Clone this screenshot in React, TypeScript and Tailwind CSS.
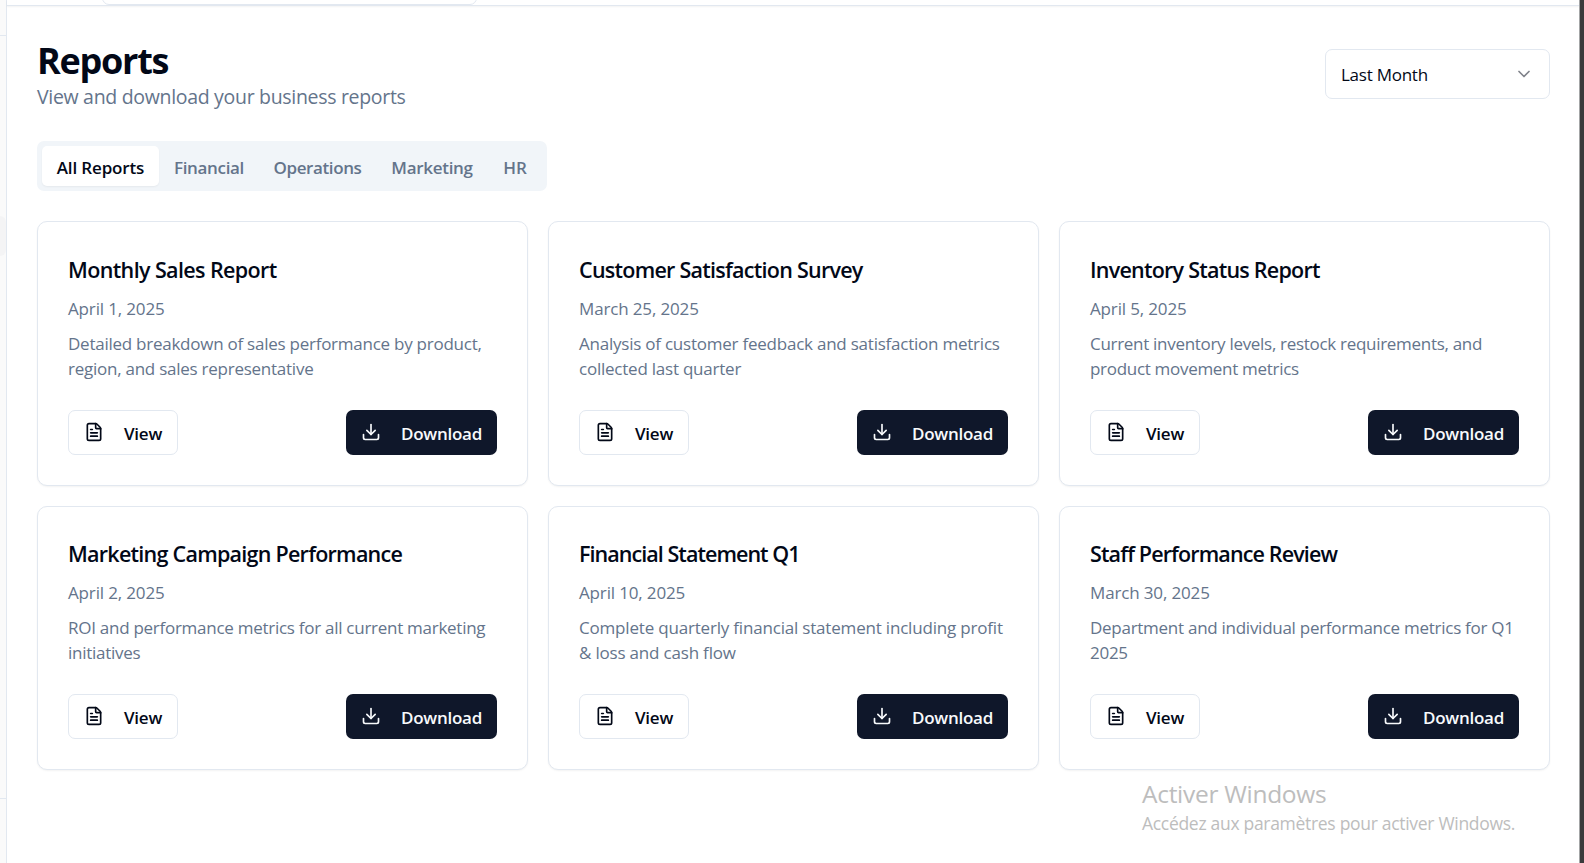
import { ChevronDown, Download, FileText } from "lucide-react";

type Report = {
  title: string;
  titleClass: string;
  date: string;
  description: string;
  descriptionClass: string;
};

const reports: Report[] = [
  {
    title: "Monthly Sales Report",
    titleClass: "tracking-[-0.62px]",
    date: "April 1, 2025",
    description: "Detailed breakdown of sales performance by product, region, and sales representative",
    descriptionClass: "tracking-[-0.25px]",
  },
  {
    title: "Customer Satisfaction Survey",
    titleClass: "tracking-[-0.74px]",
    date: "March 25, 2025",
    description: "Analysis of customer feedback and satisfaction metrics collected last quarter",
    descriptionClass: "tracking-[-0.23px]",
  },
  {
    title: "Inventory Status Report",
    titleClass: "tracking-[-0.76px]",
    date: "April 5, 2025",
    description: "Current inventory levels, restock requirements, and product movement metrics",
    descriptionClass: "tracking-[-0.3px]",
  },
  {
    title: "Marketing Campaign Performance",
    titleClass: "tracking-[-0.74px]",
    date: "April 2, 2025",
    description: "ROI and performance metrics for all current marketing initiatives",
    descriptionClass: "tracking-[-0.27px]",
  },
  {
    title: "Financial Statement Q1",
    titleClass: "tracking-[-0.95px]",
    date: "April 10, 2025",
    description: "Complete quarterly financial statement including profit & loss and cash flow",
    descriptionClass: "tracking-[-0.19px]",
  },
  {
    title: "Staff Performance Review",
    titleClass: "tracking-[-0.86px]",
    date: "March 30, 2025",
    description: "Department and individual performance metrics for Q1 2025",
    descriptionClass: "tracking-[-0.27px]",
  },
];

const tabs = [
  { label: "All Reports", className: "w-[117px] rounded-[5px] bg-white text-[#020817] shadow-[0_1px_2px_rgba(0,0,0,0.05)] tracking-[-0.15px]" },
  { label: "Financial", className: "w-[100px] tracking-[-0.34px]" },
  { label: "Operations", className: "w-[117px] tracking-[-0.39px]" },
  { label: "Marketing", className: "w-[112px] tracking-[-0.29px]" },
  { label: "HR", className: "w-[54px]" },
];

function Sidebar() {
  return (
    <aside className="flex w-[7px] shrink-0 flex-col border-r border-[#e2e8f0] bg-[#fafafa]">
      <div className="h-9 border-b border-[#e2e8f0]" />
      <div className="mt-[180px] h-10 rounded-r-md bg-[#f4f4f5]" />
      <div className="mt-[542px] border-t border-[#e2e8f0]" />
    </aside>
  );
}

function ReportCard({ report }: { report: Report }) {
  return (
    <article className="flex h-[264.375px] flex-col rounded-[10px] border border-[#e2e8f0] bg-white px-[30px] pt-[32.75px] shadow-[0_1px_2px_rgba(0,0,0,0.05)]">
      <h3 className={`text-[21.5px] leading-[30px] font-semibold whitespace-nowrap ${report.titleClass}`}>{report.title}</h3>
      <p className="mt-[11px] text-[17px] leading-[25px] tracking-[-0.15px] text-[#64748b]">{report.date}</p>
      <p className={`mt-2.5 text-[17px] leading-[25px] text-[#64748b] ${report.descriptionClass}`}>{report.description}</p>
      <div className="mt-[28.6px] flex justify-between">
        <button className="flex h-[45px] items-center gap-5 rounded-[7px] border border-[#e2e8f0] px-[15px] text-[17px] leading-[25px] font-semibold tracking-[-0.25px]">
          <FileText size={20} />
          <span className="pt-0.5">View</span>
        </button>
        <button className="flex h-[45px] items-center gap-5 rounded-[7px] bg-[#0f172a] px-[15px] text-[17px] leading-[25px] font-semibold tracking-[-0.25px] text-[#f8fafc]">
          <Download size={20} />
          <span className="pt-0.5">Download</span>
        </button>
      </div>
    </article>
  );
}

export default function App() {
  return (
    <div className="relative flex h-[863px] w-[1584px] overflow-hidden bg-white font-['Open_Sans','Noto_Sans',sans-serif] text-[#020817]">
      <Sidebar />
      <div className="flex min-w-0 flex-1 flex-col">
        <header className="flex h-1.5 shrink-0 border-b border-[#e2e8f0] pl-[95px] shadow-[0_1px_2px_rgba(0,0,0,0.05)]">
          <div className="-mt-11 h-[49px] w-[375px] rounded-[7px] border border-[#e2e8f0]" />
        </header>
        <main className="flex flex-col pr-[29px] pl-[30px]">
          <div className="flex justify-between">
            <div className="pt-[31.5px]">
              <h1 className="text-[36px] leading-[45px] font-bold tracking-[-1.25px]">Reports</h1>
              <p className="mt-[-1px] text-[19.5px] leading-[30px] tracking-[-0.31px] text-[#64748b]">View and download your business reports</p>
            </div>
            <button className="mt-[43px] flex h-[50px] w-[225px] items-center justify-between rounded-[7px] border border-[#e2e8f0] px-[15px] text-[17px] tracking-[-0.25px]">
              <span className="pt-0.5">Last Month</span>
              <ChevronDown size={20} className="opacity-50" />
            </button>
          </div>
          <nav className="mt-[29.5px] flex h-[50px] w-[510px] rounded-[7px] bg-[#f1f5f9] p-[5px] text-[17px] font-semibold text-[#64748b]">
            {tabs.map((tab) => (
              <button key={tab.label} className={`flex items-center justify-center pt-[3px] whitespace-nowrap ${tab.className}`}>
                {tab.label}
              </button>
            ))}
          </nav>
          <section className="mt-[30.25px] grid grid-cols-3 gap-5">
            {reports.map((report) => (
              <ReportCard key={report.title} report={report} />
            ))}
          </section>
        </main>
      </div>
      <div className="w-[5px] shrink-0 border-l border-[#a3a5a6] bg-[#3a3b3c]" />
      <div className="absolute top-[777px] left-[1142px] text-[#bdbdbd]">
        <p className="text-[24.5px] leading-[34px] tracking-[-0.29px]">Activer Windows</p>
        <p className="mt-[-1px] text-[17.5px] leading-[26px] tracking-[-0.3px]">Accédez aux paramètres pour activer Windows.</p>
      </div>
    </div>
  );
}
